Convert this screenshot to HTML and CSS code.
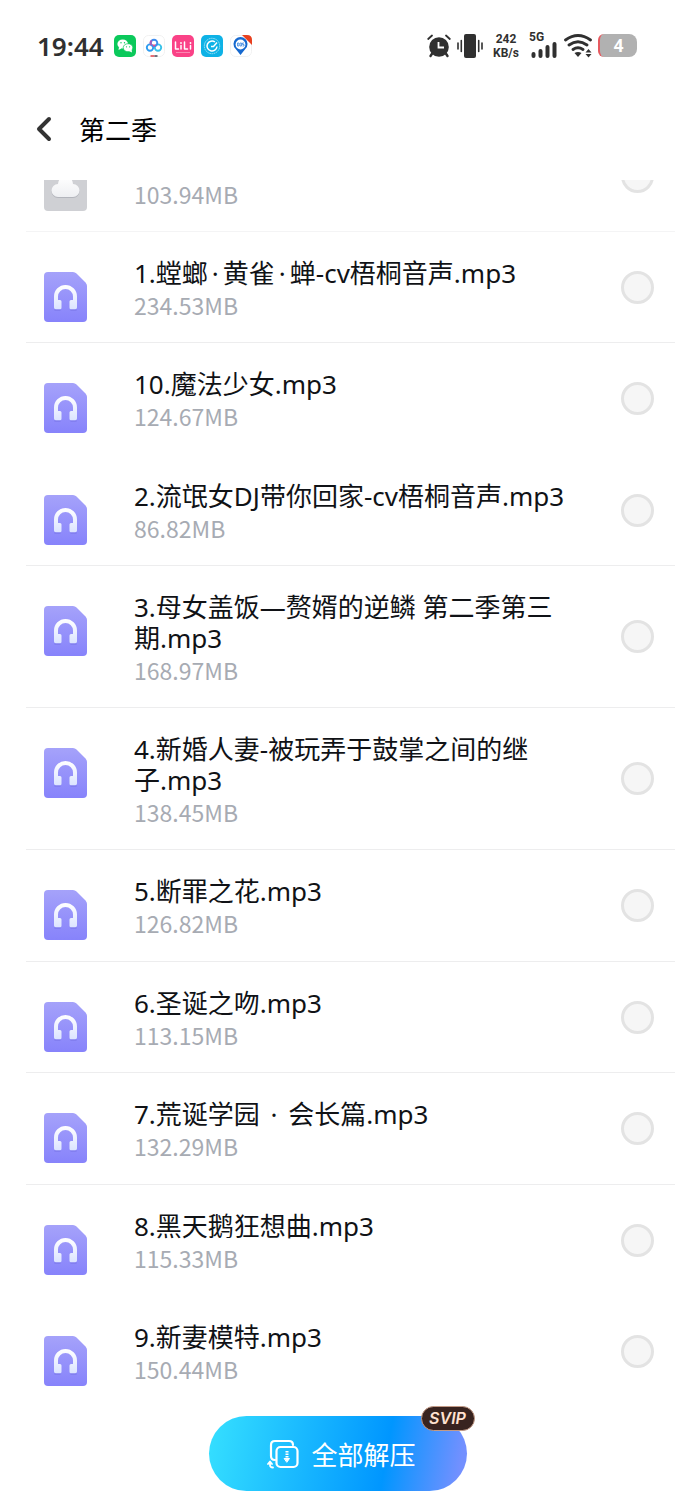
FILE: index.html
```html
<!DOCTYPE html>
<html lang="zh-CN">
<head>
<meta charset="utf-8">
<meta name="viewport" content="width=device-width, initial-scale=1">
<title>第二季</title>
<link rel="stylesheet" href="styles.css">
</head>
<body>
<svg class="defs" aria-hidden="true">
  <defs>
    <linearGradient id="doc-fill" x1="0" y1="0" x2="0" y2="1"><stop offset="0" stop-color="#a5a2fa"/><stop offset="1" stop-color="#8783fb"/></linearGradient>
    <linearGradient id="phone-fill" x1="0" y1="0" x2="0" y2="1"><stop offset="0" stop-color="#fff"/><stop offset="1" stop-color="#dce4ff"/></linearGradient>
    <linearGradient id="cloud-fill" x1="0" y1="0" x2="0" y2="1"><stop offset="0" stop-color="#fff"/><stop offset="1" stop-color="#eeeff2"/></linearGradient>
    <symbol id="audio" viewBox="0 0 43 50">
      <path d="M4 0H29Q31 0 32.500 1.500L41.500 10.500Q43 12 43 14V46Q43 50 39 50H4Q0 50 0 46V4Q0 0 4 0Z" fill="url(#doc-fill)"/>
      <path d="M11 38h5M27 38h5" stroke="#706ce0" stroke-opacity=".5" stroke-width="1.500" stroke-linecap="round"/>
      <path d="M10 35.500V24.500a11.500 11.500 0 0 1 23 0V35.500q0 1.700-1.700 1.700H27q-1.500 0-1.500-1.500V29.500q0-1.500 1.500-1.500h2V24.500a7.500 7.500 0 0 0-15 0V28H16q1.500 0 1.500 1.500v6.200q0 1.500-1.500 1.500H11.700Q10 37.200 10 35.500Z" fill="url(#phone-fill)"/>
    </symbol>
  </defs>
</svg>

<div class="status">
  <div class="status-left">
    <span class="clock">19:44</span>
    <svg class="app" viewBox="0 0 22 22"><rect width="22" height="22" rx="5" fill="#0bc95b"/><ellipse cx="8.700" cy="9" rx="5.300" ry="4.500" fill="#fff"/><path d="M5 12l-.5 3 3-1.500z" fill="#fff"/><ellipse cx="14" cy="12.700" rx="4.800" ry="4" fill="#fff" stroke="#0bc95b" stroke-width=".7"/><path d="M15 16l3 1.400-.5-2.800z" fill="#fff"/><g fill="#0bc95b"><circle cx="7" cy="7.700" r=".7"/><circle cx="10.500" cy="7.700" r=".7"/><circle cx="12.500" cy="11.800" r=".6"/><circle cx="15.600" cy="11.800" r=".6"/></g></svg>
    <svg class="app" viewBox="0 0 22 22"><rect x=".5" y=".5" width="21" height="21" rx="5" fill="#fff" stroke="#f1f1f1"/><g fill="none" stroke-width="1.900"><circle cx="7" cy="12.600" r="3.200" stroke="#2e9cf0"/><circle cx="15" cy="12.600" r="3.200" stroke="#38c2e8"/><circle cx="11" cy="8" r="3.300" stroke="#3c8df0"/><path d="M8.300 10a3.300 3.300 0 0 1 .5-4.500" stroke="#a858b8"/></g><path d="M11 12l-2-2.500h4z" fill="#e8508c"/><path d="M7.500 21h4" stroke="#e04048" stroke-width="1.500"/><path d="M11.500 21h3" stroke="#445" stroke-width="1.500"/></svg>
    <svg class="app" viewBox="0 0 22 22"><rect width="22" height="22" rx="5" fill="#fa4287"/><g fill="none" stroke="#fff" stroke-width="1.500" stroke-linecap="round" stroke-linejoin="round"><path d="M3.500 7v7h3M9 10.500v3.500M12.500 7v7h3M18.500 10.500v3.500"/></g><g fill="#fff"><circle cx="9" cy="8" r=".9"/><circle cx="18.500" cy="8" r=".9"/></g><path d="M4 17.500h14" stroke="#fb86b2"/></svg>
    <svg class="app" viewBox="0 0 22 22"><rect width="22" height="22" rx="5" fill="#0eb2e6"/><circle cx="11" cy="11" r="7.700" fill="none" stroke="#a5e5f6" stroke-dasharray="1.500 .7"/><path d="M14 7a5 5 0 1 0 2 4.500M10 11.500h2.500l3.500-4" fill="none" stroke="#fff" stroke-width="1.500"/></svg>
    <svg class="app" viewBox="0 0 22 22"><rect x=".5" y=".5" width="21" height="21" rx="5" fill="#fff" stroke="#f1f1f1"/><path d="M12 0h5q5 0 5 5v5z" fill="#e8401f"/><path d="M10.500 20l-5-6.200a7 7 0 1 1 10 0z" fill="#1669cf"/><circle cx="10.500" cy="9.500" r="4.900" fill="#fff"/><path d="M7.500 8v3h1.500V8zm2.500 0v3h1.500V8zm4 0h-1.500v1.500H14V11h-1.500" fill="none" stroke="#3c88e0" stroke-width=".8"/></svg>
  </div>
  <div class="status-right">
    <svg class="alarm" viewBox="0 0 24 24"><path d="M5.500 19l-2 3M18.500 19l2 3" stroke="#303030" stroke-width="2.400" stroke-linecap="round"/><circle cx="12" cy="13" r="9.800" fill="#303030"/><path d="M1.200 5L5 1.500M22.800 5L19 1.500" stroke="#303030" stroke-width="1.800" stroke-linecap="round"/><path d="M11.500 8v5.500h5.500" fill="none" stroke="#fff" stroke-width="1.800"/></svg>
    <svg class="vibrate" viewBox="0 0 26 24"><rect x="7" y="0" width="12" height="24" rx="2" fill="#303030"/><path d="M1 9v6M4.300 6.500v11M21.700 6.500v11M25 9v6" stroke="#303030" stroke-width="1.600" stroke-linecap="round"/></svg>
    <span class="speed"><span>242</span><span>KB/s</span></span>
    <span class="cell"><span>5G</span><svg viewBox="0 0 26 16"><path d="M2.500 12v2M9.500 9v5M16.500 5v9M23.500 2v12" stroke="#303030" stroke-width="4" stroke-linecap="round"/></svg></span>
    <svg class="wifi" viewBox="0 0 28 24"><g fill="none" stroke="#303030" stroke-width="2.800" stroke-linecap="round"><path d="M1.500 6q12.500-9 25 0M5 11q9-6.500 18 0M9 15.500q5-3.500 10 0"/></g><path d="M10.500 19q3.500-2.200 7 0L14 23z" fill="#303030"/><path d="M21.500 18.500h6L24.500 15zM21.500 20h6l-3 3.500z" fill="#303030"/></svg>
    <span class="battery">4</span>
  </div>
</div>

<header class="header">
  <button class="back" aria-label="返回"><svg viewBox="0 0 16 26"><path d="M13 3L3 13l10 10" fill="none" stroke="#333" stroke-width="4" stroke-linecap="round" stroke-linejoin="round"/></svg></button>
  <h1>第二季</h1>
</header>

<main class="viewport">
  <ul class="files">
    <li class="file"><svg class="icon" viewBox="0 0 43 50"><path d="M4 0H30L43 12V46Q43 50 39 50H4Q0 50 0 46V4Q0 0 4 0Z" fill="#cfd0d4"/><path d="M14 37h15a6.500 6.500 0 0 0 0-13 7.500 7.500 0 1 0-15 0 6.500 6.500 0 0 0 0 13Z" fill="#b3b5bc"/><path d="M14 36h15a6.500 6.500 0 0 0 0-13 7.500 7.500 0 1 0-15 0 6.500 6.500 0 0 0 0 13Z" fill="url(#cloud-fill)"/></svg><label class="info" for="f0"><span class="name"></span><span class="size">103.94MB</span></label><input type="checkbox" id="f0"></li>
    <li class="file"><svg class="icon"><use href="#audio"/></svg><label class="info" for="f1"><span class="name">1.螳螂<span class="dot">·</span>黄雀<span class="dot">·</span>蝉-cv梧桐音声.mp3</span><span class="size">234.53MB</span></label><input type="checkbox" id="f1"></li>
    <li class="file plain"><svg class="icon"><use href="#audio"/></svg><label class="info" for="f10"><span class="name">10.魔法少女.mp3</span><span class="size">124.67MB</span></label><input type="checkbox" id="f10"></li>
    <li class="file"><svg class="icon"><use href="#audio"/></svg><label class="info" for="f2"><span class="name">2.流氓女DJ带你回家-cv梧桐音声.mp3</span><span class="size">86.82MB</span></label><input type="checkbox" id="f2"></li>
    <li class="file"><svg class="icon"><use href="#audio"/></svg><label class="info" for="f3"><span class="name">3.母女盖饭—赘婿的逆鳞 第二季第三期.mp3</span><span class="size">168.97MB</span></label><input type="checkbox" id="f3"></li>
    <li class="file"><svg class="icon"><use href="#audio"/></svg><label class="info" for="f4"><span class="name">4.新婚人妻-被玩弄于鼓掌之间的继子.mp3</span><span class="size">138.45MB</span></label><input type="checkbox" id="f4"></li>
    <li class="file"><svg class="icon"><use href="#audio"/></svg><label class="info" for="f5"><span class="name">5.断罪之花.mp3</span><span class="size">126.82MB</span></label><input type="checkbox" id="f5"></li>
    <li class="file"><svg class="icon"><use href="#audio"/></svg><label class="info" for="f6"><span class="name">6.圣诞之吻.mp3</span><span class="size">113.15MB</span></label><input type="checkbox" id="f6"></li>
    <li class="file"><svg class="icon"><use href="#audio"/></svg><label class="info" for="f7"><span class="name">7.荒诞学园 <span class="dot">·</span> 会长篇.mp3</span><span class="size">132.29MB</span></label><input type="checkbox" id="f7"></li>
    <li class="file plain"><svg class="icon"><use href="#audio"/></svg><label class="info" for="f8"><span class="name">8.黑天鹅狂想曲.mp3</span><span class="size">115.33MB</span></label><input type="checkbox" id="f8"></li>
    <li class="file plain"><svg class="icon"><use href="#audio"/></svg><label class="info" for="f9"><span class="name">9.新妻模特.mp3</span><span class="size">150.44MB</span></label><input type="checkbox" id="f9"></li>
  </ul>
</main>

<footer class="footer">
  <button class="extract">
    <svg class="extract-icon" viewBox="0 0 32 30" fill="none" stroke="#fff" stroke-width="2.200" stroke-linecap="round" stroke-linejoin="round"><path d="M8 21Q4 21 4 17V6q0-4 4-4h14q4 0 4 4"/><rect x="9.500" y="8" width="21" height="20" rx="4"/><path d="M20 12v7" stroke-width="3" stroke-dasharray="1.500 1" stroke-linecap="butt"/><path d="M17.500 19.500h5L20 23z" fill="#fff" stroke-width="1"/><path d="M1 25L3 22.500 5 25M3 23v3q0 2.500 3 2.500" stroke-width="1.800"/></svg>
    <span>全部解压</span>
    <span class="badge">SVIP</span>
  </button>
</footer>
</body>
</html>
```

FILE: styles.css
```css
* { box-sizing: border-box; }

body {
  margin: 0;
  background: #fff;
  color: #101216;
  font-family: "Noto Sans CJK SC", sans-serif;
}

button { border: 0; padding: 0; background: none; font: inherit; color: inherit; cursor: pointer; }
svg { display: block; flex: none; }
.defs { position: absolute; width: 0; height: 0; }

.status {
  display: flex;
  justify-content: space-between;
  align-items: center;
  height: 91px;
  padding: 0 38px 0 37px;
  color: #303030;
}
.status-left, .status-right { display: flex; align-items: center; }
.status-left { gap: 7px; }
.clock { margin-right: 3px; font: 600 26px/32px "Noto Sans", sans-serif; }
.app { width: 22px; height: 22px; }
.alarm { width: 24px; height: 24px; margin-right: 6px; }
.vibrate { width: 26px; height: 24px; margin-right: 8px; }
.speed { display: flex; flex-direction: column; width: 30px; margin-right: 8px; font: 700 12px/14px "Roboto", sans-serif; text-align: center; }
.cell { display: flex; flex-direction: column; width: 28px; margin-right: 7px; font: 700 12px/9px "Roboto", sans-serif; }
.cell svg { width: 26px; height: 16px; align-self: flex-end; }
.wifi { width: 28px; height: 24px; margin-right: 6px; }
.battery {
  width: 39px;
  height: 23px;
  border-left: 2px solid #e65a60;
  border-radius: 6px 8px 8px 6px;
  background: #b1b1b1;
  color: #fff;
  font: 700 17px/23px "Noto Sans", sans-serif;
  text-align: center;
}

.header { display: flex; align-items: center; height: 89px; padding: 0 36px 14px; gap: 27px; }
.back svg { width: 16px; height: 26px; }
.header h1 { margin: 0; color: #000; font-size: 26px; font-weight: 400; line-height: 36px; }

.viewport { overflow: hidden; }
.files { margin: -59px 0 0; padding: 0; list-style: none; }
.file {
  display: flex;
  align-items: center;
  min-height: 111px;
  margin-left: 26px;
  padding: 0 21px 0 18px;
  border-bottom: 1px solid #ededee;
}
.file:nth-child(odd) { min-height: 112px; }
.file:first-child { min-height: 111px; border-color: #f4f4f5; }
.file.plain { border-color: transparent; }
.icon { align-self: flex-start; width: 43px; height: 50px; margin-top: 40px; }
.info { flex: 1; align-self: flex-start; min-width: 0; margin: 0 43px 0 47px; padding: 26px 0 21px; }
.name, .size { display: block; }
.name { min-height: 31px; font-family: "Noto Sans", "Noto Sans CJK SC", sans-serif; font-size: 26px; line-height: 31px; }
.dot { margin: 0 4px; }
.size { color: #a7abb3; font-size: 23px; line-height: 32px; }
.file input {
  appearance: none;
  width: 33px;
  height: 33px;
  margin: 0;
  border: 3px solid #e3e3e3;
  border-radius: 50%;
  background: #f6f6f6;
}

.footer { display: flex; justify-content: center; padding: 8px 0 9px; }
.extract {
  position: relative;
  display: flex;
  align-items: center;
  justify-content: center;
  gap: 12px;
  width: 258px;
  height: 75px;
  padding: 0 0 0 8px;
  border-radius: 38px;
  background: linear-gradient(100deg, #36e0ff, #0096ff 68%, #7390ff 96%);
  color: #fff;
  font-size: 26px;
}
.extract-icon { width: 32px; height: 30px; }
.badge {
  position: absolute;
  top: -10px;
  right: -8px;
  width: 54px;
  height: 25px;
  border: 1px solid #c39a86;
  border-radius: 13px;
  background: #38231f;
  color: #ffe1d0;
  font: italic 600 16px/23px "Inter", sans-serif;
}
```
